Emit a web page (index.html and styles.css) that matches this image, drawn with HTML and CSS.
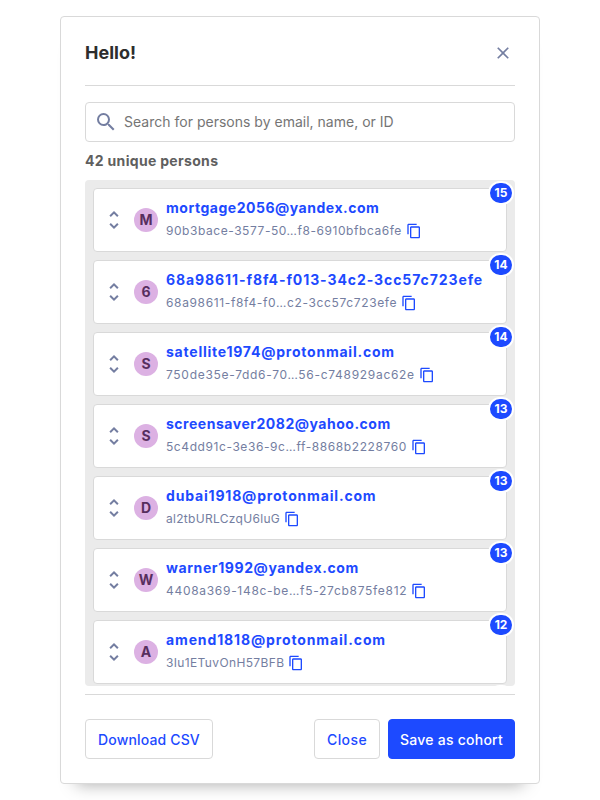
FILE: index.html
```
<!DOCTYPE html>
<html lang="en">
<head>
<meta charset="utf-8">
<title>Persons</title>
<link rel="stylesheet" href="styles.css">
</head>
<body>
<svg width="0" height="0" class="defs">
  <symbol id="expand" viewBox="0 0 24 24"><path d="M12 5.83 15.17 9l1.41-1.41L12 3 7.41 7.59 8.83 9 12 5.83zm0 12.34L8.83 15l-1.41 1.41L12 21l4.59-4.59L15.17 15 12 18.17z" fill="currentColor"/></symbol>
  <symbol id="copy" viewBox="0 0 24 24"><path d="M16 1H4c-1.1 0-2 .9-2 2v14h2V3h12V1zm3 4H8c-1.1 0-2 .9-2 2v14c0 1.1.9 2 2 2h11c1.1 0 2-.9 2-2V7c0-1.1-.9-2-2-2zm0 16H8V7h11v14z" fill="currentColor"/></symbol>
</svg>
<div class="modal">
  <header class="modal-header">
    <h3>Hello!</h3>
    <svg class="close-icon" viewBox="0 0 24 24"><path d="M19 6.41 17.59 5 12 10.59 6.41 5 5 6.41 10.59 12 5 17.59 6.41 19 12 13.41 17.59 19 19 17.59 13.41 12z" fill="currentColor"/></svg>
  </header>
  <div class="search">
    <svg class="search-icon" viewBox="0 0 24 24"><path d="M15.5 14h-.79l-.28-.27A6.471 6.471 0 0 0 16 9.5 6.5 6.5 0 1 0 9.5 16c1.61 0 3.09-.59 4.23-1.57l.27.28v.79l5 4.99L20.49 19l-4.99-5zm-6 0C7.01 14 5 11.99 5 9.5S7.01 5 9.5 5 14 7.01 14 9.5 11.99 14 9.5 14z" fill="currentColor"/></svg>
    <span>Search for persons by email, name, or ID</span>
  </div>
  <div class="summary">42 unique persons</div>
  <div class="list">
    <div class="row"><svg class="expand"><use href="#expand"/></svg><span class="avatar">M</span><div class="person"><a class="name">mortgage2056@yandex.com</a><div class="id"><span>90b3bace-3577-50…f8-6910bfbca6fe</span><svg class="copy"><use href="#copy"/></svg></div></div><span class="badge">15</span></div>
    <div class="row"><svg class="expand"><use href="#expand"/></svg><span class="avatar">6</span><div class="person"><a class="name">68a98611-f8f4-f013-34c2-3cc57c723efe</a><div class="id"><span>68a98611-f8f4-f0…c2-3cc57c723efe</span><svg class="copy"><use href="#copy"/></svg></div></div><span class="badge">14</span></div>
    <div class="row"><svg class="expand"><use href="#expand"/></svg><span class="avatar">S</span><div class="person"><a class="name">satellite1974@protonmail.com</a><div class="id"><span>750de35e-7dd6-70…56-c748929ac62e</span><svg class="copy"><use href="#copy"/></svg></div></div><span class="badge">14</span></div>
    <div class="row"><svg class="expand"><use href="#expand"/></svg><span class="avatar">S</span><div class="person"><a class="name">screensaver2082@yahoo.com</a><div class="id"><span>5c4dd91c-3e36-9c…ff-8868b2228760</span><svg class="copy"><use href="#copy"/></svg></div></div><span class="badge">13</span></div>
    <div class="row"><svg class="expand"><use href="#expand"/></svg><span class="avatar">D</span><div class="person"><a class="name">dubai1918@protonmail.com</a><div class="id"><span>al2tbURLCzqU6luG</span><svg class="copy"><use href="#copy"/></svg></div></div><span class="badge">13</span></div>
    <div class="row"><svg class="expand"><use href="#expand"/></svg><span class="avatar">W</span><div class="person"><a class="name">warner1992@yandex.com</a><div class="id"><span>4408a369-148c-be…f5-27cb875fe812</span><svg class="copy"><use href="#copy"/></svg></div></div><span class="badge">13</span></div>
    <div class="row"><svg class="expand"><use href="#expand"/></svg><span class="avatar">A</span><div class="person"><a class="name">amend1818@protonmail.com</a><div class="id"><span>3Iu1ETuvOnH57BFB</span><svg class="copy"><use href="#copy"/></svg></div></div><span class="badge">12</span></div>
    <div class="row"><span class="badge"></span></div>
  </div>
  <footer class="modal-footer">
    <button class="btn download">Download CSV</button>
    <span class="spacer"></span>
    <button class="btn close">Close</button>
    <button class="btn primary">Save as cohort</button>
  </footer>
</div>
</body>
</html>
```
FILE: styles.css
```
* { box-sizing: border-box; }
body { margin: 0; height: 800px; overflow: hidden; background: #fff; font-family: Inter, sans-serif; font-size: 14px; color: #2d2d2d; }
.defs { position: absolute; }
.modal { width: 480px; height: 768px; margin: 16px auto; padding: 0 24px 24px; display: flex; flex-direction: column; background: #fff; border: 1px solid #d9d9d9; border-radius: 4px; box-shadow: 0 16px 16px -16px rgba(0,0,0,.35); }
.modal-header { height: 69px; flex: none; display: flex; align-items: center; justify-content: space-between; padding-top: 3px; border-bottom: 1px solid #d9d9d9; }
h3 { margin: 0; font-size: 18px; line-height: 24px; font-weight: 700; }
.close-icon { width: 20px; height: 20px; margin-right: 2px; color: #747ea1; }
.search { height: 40px; flex: none; margin-top: 16px; padding-left: 8px; display: flex; align-items: center; gap: 6px; border: 1px solid #d9d9d9; border-radius: 4px; color: #757575; }
.search span { padding-bottom: 2px; letter-spacing: .01px; }
.search-icon { width: 24px; height: 24px; color: #747ea1; }
.summary { flex: none; margin-top: 8px; line-height: 22px; margin-bottom: 8px; font-weight: 700; color: #5f5f5f; letter-spacing: .32px; }
.list { height: 506px; flex: none; overflow: hidden; padding: 8px; display: flex; flex-direction: column; gap: 8px; background: #ebebeb; border-radius: 4px; }
.row { position: relative; flex: none; height: 64px; display: flex; align-items: center; padding-left: 8px; background: #fff; border: 1px solid #d9d9d9; border-radius: 4px; --name-track: .52px; --id-track: .55px; }
.row:nth-child(2) { --name-track: .91px; --id-track: .64px; }
.row:nth-child(3) { --name-track: .77px; --id-track: .7px; }
.row:nth-child(4) { --name-track: .52px; --id-track: .58px; }
.row:nth-child(5) { --name-track: .82px; --id-track: .3px; }
.row:nth-child(6) { --name-track: .6px; --id-track: .7px; }
.row:nth-child(7) { --name-track: .87px; --id-track: .36px; }
.expand { width: 24px; height: 24px; color: #747ea1; }
.avatar { width: 24px; height: 24px; margin: 0 8px; border-radius: 50%; background: #dcb1e3; color: #572e5e; font-weight: 700; line-height: 24px; text-align: center; }
.name { display: block; height: 22px; font-weight: 700; line-height: 20px; color: #1d4aff; letter-spacing: var(--name-track); }
.id { display: flex; align-items: center; gap: 4px; height: 22px; font-size: 12px; color: #747ea1; letter-spacing: var(--id-track); }
.id span { padding-bottom: 2px; }
.copy { width: 16px; height: 16px; color: #1d4aff; }
.badge { position: absolute; top: -8px; right: -8px; min-width: 26px; height: 24px; border: 2px solid #fff; border-radius: 12px; background: #1d4aff; color: #fff; font-size: 12px; font-weight: 700; line-height: 20px; text-align: center; }
.modal-footer { margin-top: 8px; padding-top: 24px; display: flex; gap: 8px; border-top: 1px solid #d9d9d9; }
.spacer { flex: 1; margin: 0 -8px; }
.btn { height: 40px; padding: 0; border: 1px solid #d9d9d9; border-radius: 4px; background: #fff; color: #1d4aff; font: 500 14px Inter, sans-serif; }
.download { width: 128px; letter-spacing: .15px; }
.close { width: 66px; letter-spacing: .4px; }
.primary { width: 127px; letter-spacing: .25px; background: #1d4aff; border-color: #1d4aff; color: #fff; }
```
